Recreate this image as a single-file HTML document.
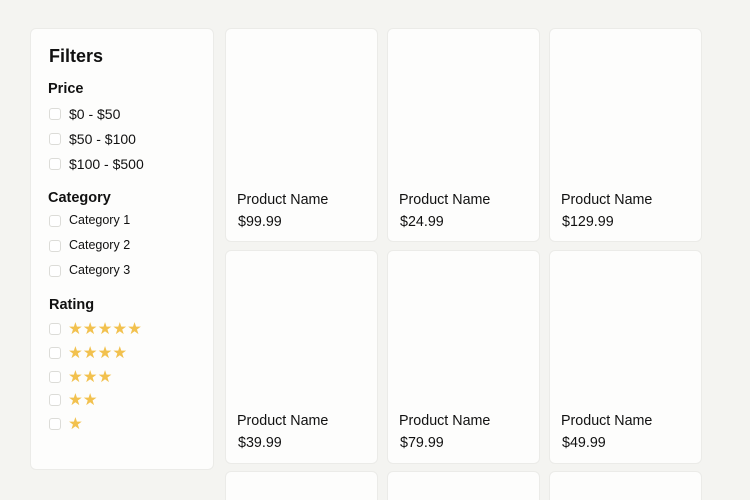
<!DOCTYPE html>
<html><head><meta charset="utf-8"><style>
*{margin:0;padding:0;box-sizing:border-box}
html,body{width:750px;height:500px;overflow:hidden}
body{background:#f4f4f1;font-family:"Liberation Sans",sans-serif;color:#111;position:relative}
.box{position:absolute;background:#fdfdfc;border:1px solid #ebebe8;border-radius:6px}
.t{position:absolute;white-space:nowrap}
.cb{position:absolute;left:49px;width:12px;height:12px;border:1px solid #dcdcd8;border-radius:3px;background:#fff}
.st{position:absolute;left:68px;color:#f2c14e;font-size:16.5px;letter-spacing:0px;line-height:16px}
.pn{position:absolute;font-size:14.3px}
</style></head><body>
<div class="box" style="left:30px;top:28px;width:184px;height:442px"></div>
<div class="t" style="left:49px;top:46px;font-size:18px;font-weight:bold">Filters</div>
<div class="t" style="left:48px;top:81px;font-size:14.5px;font-weight:bold">Price</div>
<div class="cb" style="top:108px"></div><div class="t" style="left:69px;top:106px;font-size:14px">$0 - $50</div>
<div class="cb" style="top:133px"></div><div class="t" style="left:69px;top:131px;font-size:14px">$50 - $100</div>
<div class="cb" style="top:158px"></div><div class="t" style="left:69px;top:156px;font-size:14px">$100 - $500</div>
<div class="t" style="left:48px;top:190px;font-size:14.5px;font-weight:bold">Category</div>
<div class="cb" style="top:215px"></div><div class="t" style="left:69px;top:213px;font-size:12.5px">Category 1</div>
<div class="cb" style="top:240px"></div><div class="t" style="left:69px;top:238px;font-size:12.5px">Category 2</div>
<div class="cb" style="top:265px"></div><div class="t" style="left:69px;top:263px;font-size:12.5px">Category 3</div>
<div class="t" style="left:49px;top:297px;font-size:14.5px;font-weight:bold">Rating</div>
<div class="cb" style="top:323px"></div><div class="st" style="top:321px">★★★★★</div>
<div class="cb" style="top:347px"></div><div class="st" style="top:345px">★★★★</div>
<div class="cb" style="top:371px"></div><div class="st" style="top:369px">★★★</div>
<div class="cb" style="top:394px"></div><div class="st" style="top:392px">★★</div>
<div class="cb" style="top:418px"></div><div class="st" style="top:416px">★</div>

<div class="box" style="left:225px;top:28px;width:153px;height:214px"></div>
<div class="box" style="left:387px;top:28px;width:153px;height:214px"></div>
<div class="box" style="left:549px;top:28px;width:153px;height:214px"></div>
<div class="box" style="left:225px;top:250px;width:153px;height:214px"></div>
<div class="box" style="left:387px;top:250px;width:153px;height:214px"></div>
<div class="box" style="left:549px;top:250px;width:153px;height:214px"></div>
<div class="box" style="left:225px;top:471px;width:153px;height:40px"></div>
<div class="box" style="left:387px;top:471px;width:153px;height:40px"></div>
<div class="box" style="left:549px;top:471px;width:153px;height:40px"></div>

<div class="pn" style="left:237px;top:192px">Product Name</div><div class="pn" style="left:238px;top:214px">$99.99</div>
<div class="pn" style="left:399px;top:192px">Product Name</div><div class="pn" style="left:400px;top:214px">$24.99</div>
<div class="pn" style="left:561px;top:192px">Product Name</div><div class="pn" style="left:562px;top:214px">$129.99</div>
<div class="pn" style="left:237px;top:413px">Product Name</div><div class="pn" style="left:238px;top:435px">$39.99</div>
<div class="pn" style="left:399px;top:413px">Product Name</div><div class="pn" style="left:400px;top:435px">$79.99</div>
<div class="pn" style="left:561px;top:413px">Product Name</div><div class="pn" style="left:562px;top:435px">$49.99</div>
</body></html>
